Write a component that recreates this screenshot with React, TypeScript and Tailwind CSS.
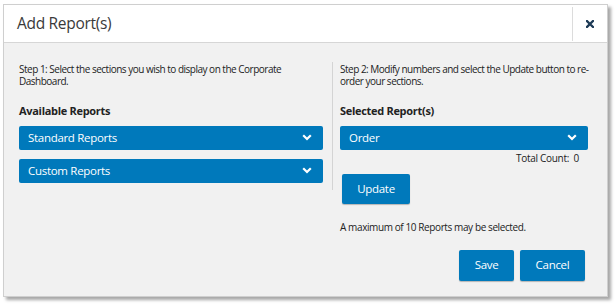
import React from 'react';

const font = { fontFamily: '"Open Sans", "Noto Sans", sans-serif' };

const Chevron: React.FC = () => (
  <svg width="10" height="7" viewBox="0 0 10 7" className="shrink-0">
    <path d="M1.2 1.2 L5 5 L8.8 1.2" fill="none" stroke="#ffffff" strokeWidth="2.2" />
  </svg>
);

const CloseIcon: React.FC = () => (
  <svg width="8" height="8" viewBox="0 0 8 8">
    <path d="M1 1 L7 7 M7 1 L1 7" stroke="#1d3a56" strokeWidth="2.3" strokeLinecap="square" />
  </svg>
);

const Dropdown: React.FC<{ label: string }> = ({ label }) => (
  <div className="flex h-[24px] items-center justify-between rounded-[2px] bg-[#0079bb] pl-[9px] pr-[11px] text-[11.5px] tracking-[-0.3px] text-white">
    <span>{label}</span>
    <Chevron />
  </div>
);

const BlueButton: React.FC<{ label: string; className?: string }> = ({ label, className }) => (
  <button
    className={`flex items-center justify-center rounded-[2px] bg-[#0079bb] text-[11.5px] tracking-[-0.3px] text-white shadow-[0_1px_1px_rgba(0,0,0,0.25)] ${className ?? ''}`}
  >
    {label}
  </button>
);

export default function App() {
  return (
    <div className="h-[305px] w-[616px] bg-white pl-[3px] pt-[4px]" style={font}>
      <div className="flex h-[293px] w-[605px] flex-col border border-[#cfcfcf] shadow-[3px_3px_3px_rgba(0,0,0,0.35)]">
        {/* header */}
        <div className="flex h-[38px] items-center border-b border-[#d6d6d6] bg-white">
          <h1 className="flex-1 pl-[13px] text-[15.5px] tracking-[-0.3px] text-[#3a3a3a]">Add Report(s)</h1>
          <div className="flex h-[34px] w-[35px] items-center justify-center border-l border-[#dcdcdc]">
            <CloseIcon />
          </div>
        </div>

        {/* body */}
        <div className="flex flex-1 flex-col bg-[#f1f1f1] px-[15px] pt-[20px]">
          <div className="flex">
            <div className="w-[304px]">
              <p className="h-[26px] text-[10px] leading-[12px] tracking-[-0.5px] text-[#222]">
                Step 1: Select the sections you wish to display on the Corporate Dashboard.
              </p>
              <p className="mt-[14px] text-[11px] font-bold tracking-[-0.3px] text-[#222]">Available Reports</p>
              <div className="mt-[6px] flex flex-col gap-[9px]">
                <Dropdown label="Standard Reports" />
                <Dropdown label="Custom Reports" />
              </div>
            </div>
            <div className="ml-[9px] mt-[-1px] h-[128px] w-px bg-[#d4d4d4]" />
            <div className="ml-[7px] w-[248px]">
              <p className="h-[26px] w-[250px] text-[10px] leading-[12px] tracking-[-0.5px] text-[#222]">
                Step 2: Modify numbers and select the Update button to re-order your sections.
              </p>
              <p className="mt-[14px] text-[11px] font-bold tracking-[-0.3px] text-[#222]">Selected Report(s)</p>
              <div className="mt-[6px]">
                <Dropdown label="Order" />
              </div>
              <p className="mt-[1px] pr-[9px] text-right text-[10px] tracking-[-0.3px] text-[#222]">Total Count:&nbsp; 0</p>
              <BlueButton label="Update" className="ml-[2px] mt-[8px] h-[30px] w-[68px]" />
              <p className="mt-[16px] text-[10px] tracking-[-0.4px] text-[#222]">A maximum of 10 Reports may be selected.</p>
            </div>
          </div>
          <div className="mr-[7px] mt-[15px] flex justify-end gap-[6px]">
            <BlueButton label="Save" className="h-[31px] w-[55px]" />
            <BlueButton label="Cancel" className="h-[31px] w-[65px]" />
          </div>
        </div>
      </div>
    </div>
  );
}
